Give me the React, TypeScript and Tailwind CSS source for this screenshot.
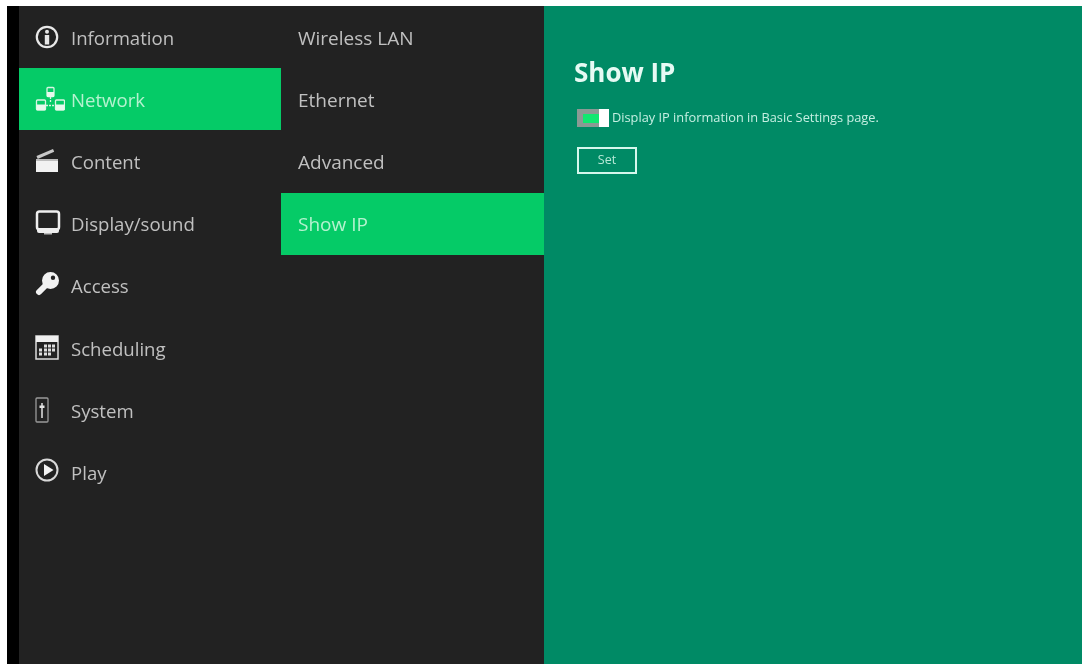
import { ReactNode } from 'react';

const InfoIcon = () => (
    <svg viewBox="0 0 24 24" className="w-6 h-6">
        <circle cx="12" cy="12" r="10.200" fill="none" stroke="#e8e8e8" strokeWidth="2.200" />
        <circle cx="12" cy="6.800" r="2" fill="#e8e8e8" />
        <rect x="9.800" y="10" width="4.400" height="9.500" fill="#e8e8e8" />
    </svg>
);

const NetworkIcon = () => (
    <svg viewBox="0 0 30 26" className="w-[30px] h-[26px]">
        <g fill="none" stroke="#d8f5e2" strokeWidth="1.300">
            <path d="M15.500 11v6M11 19.500h9" strokeDasharray="2 1" />
            <rect x="12" y="1.500" width="7" height="9" rx="1" />
            <rect x="1.500" y="14" width="9" height="10" rx="1" />
            <rect x="20.500" y="14" width="9" height="10" rx="1" />
        </g>
        <g fill="#e6faed">
            <rect x="12" y="6" width="7" height="5" />
            <rect x="1.500" y="18.500" width="9" height="5.500" />
            <rect x="20.500" y="18.500" width="9" height="5.500" />
        </g>
    </svg>
);

const ContentIcon = () => (
    <svg viewBox="0 0 24 26" className="w-6 h-[26px]">
        <path d="M1.500 8 18 1l1.200 2.800L2.700 11z" fill="#c8c8c8" />
        <path d="M1 11h22v3H1z" fill="#bdbdbd" />
        <rect x="1" y="13" width="22" height="11" fill="#f2f2f2" />
    </svg>
);

const DisplayIcon = () => (
    <svg viewBox="0 0 26 26" className="w-[26px] h-[26px]">
        <rect x="2" y="1.500" width="22" height="18" rx="2.500" fill="none" stroke="#eeeeee" strokeWidth="2.500" />
        <path d="M2 18h22v3a2 2 0 0 1-2 2H4a2 2 0 0 1-2-2z" fill="#eeeeee" />
        <rect x="9" y="23" width="8" height="1.500" fill="#bbbbbb" />
    </svg>
);

const KeyIcon = () => (
    <svg viewBox="0 0 26 26" className="w-[26px] h-[26px]">
        <path d="M11 13 4 20" stroke="#f2f2f2" strokeWidth="6" strokeLinecap="round" />
        <path
            fillRule="evenodd"
            d="M15.500 0a8.500 8.500 0 1 1 0 17 8.500 8.500 0 0 1 0-17zM18 3.500a2.200 2.200 0 1 0 0 4.400 2.200 2.200 0 0 0 0-4.400z"
            fill="#f2f2f2"
        />
    </svg>
);

const CalendarIcon = () => (
    <svg viewBox="0 1.500 24 24" className="w-6 h-6 overflow-visible">
        <rect x="1" y="1.500" width="22" height="23" fill="none" stroke="#dddddd" strokeWidth="1.500" />
        <rect x="1" y="1.500" width="22" height="6" fill="#f0f0f0" />
        <g fill="#dddddd">
            <rect x="9" y="10" width="3" height="3" />
            <rect x="13" y="10" width="3" height="3" />
            <rect x="17" y="10" width="3" height="3" />
            <rect x="4" y="14" width="3" height="3" />
            <rect x="9" y="14" width="3" height="3" />
            <rect x="13" y="14" width="3" height="3" />
            <rect x="17" y="14" width="3" height="3" />
            <rect x="4" y="18" width="3" height="3" />
            <rect x="9" y="18" width="3" height="3" />
            <rect x="13" y="18" width="3" height="3" />
        </g>
    </svg>
);

const SystemIcon = () => (
    <svg viewBox="0 0 14 26" className="w-[14px] h-[26px]">
        <rect x="1" y="1" width="12" height="24" rx="1" fill="none" stroke="#9a9a9a" strokeWidth="1.300" />
        <path d="M7 6v15" stroke="#e4e4e4" strokeWidth="1.500" />
        <rect x="4.500" y="8.500" width="5" height="2.500" fill="#e4e4e4" />
    </svg>
);

const PlayIcon = () => (
    <svg viewBox="0 2 24 24" className="w-6 h-6 overflow-visible">
        <circle cx="12" cy="12" r="10.500" fill="none" stroke="#d8d8d8" strokeWidth="2" />
        <path d="M9 6 18.500 12 9 18z" fill="#f2f2f2" />
    </svg>
);

interface MenuEntry {
    label: string;
    icon: ReactNode;
    active?: boolean;
}

const mainMenu: MenuEntry[] = [
    { label: 'Information', icon: <InfoIcon /> },
    { label: 'Network', icon: <NetworkIcon />, active: true },
    { label: 'Content', icon: <ContentIcon /> },
    { label: 'Display/sound', icon: <DisplayIcon /> },
    { label: 'Access', icon: <KeyIcon /> },
    { label: 'Scheduling', icon: <CalendarIcon /> },
    { label: 'System', icon: <SystemIcon /> },
    { label: 'Play', icon: <PlayIcon /> }
];

const subMenu = ['Wireless LAN', 'Ethernet', 'Advanced', 'Show IP'];

export default function App() {
    return (
        <div className="h-[667px] bg-white pl-[7px] pr-[5px] pt-[6px] pb-[3px] font-['Open_Sans','Noto_Sans',sans-serif] overflow-hidden">
            <div className="flex h-full blur-[0.5px]">
                <div className="w-3 bg-black" />

                <div className="w-[262px] bg-[#222222]">
                    {mainMenu.map((item) => (
                        <div
                            key={item.label}
                            className={`h-[62.100px] flex items-center text-[18.600px] ${
                                item.active ? 'bg-[#05cb67] text-[#b5f2cf]' : 'text-[#c0c0c0]'
                            }`}
                        >
                            <div className="w-[52px] pl-[16px] flex justify-start shrink-0">{item.icon}</div>
                            <span className="pt-[2px]">{item.label}</span>
                        </div>
                    ))}
                </div>

                <div className="w-[263px] bg-[#222222]">
                    {subMenu.map((label) => (
                        <div
                            key={label}
                            className={`h-[62.300px] flex items-center pl-[17px] text-[19px] ${
                                label === 'Show IP' ? 'bg-[#05cb67] text-[#b5f2cf]' : 'text-[#c0c0c0]'
                            }`}
                        >
                            <span className={label === 'Show IP' ? '' : 'pt-[2px]'}>{label}</span>
                        </div>
                    ))}
                </div>

                <div className="flex-1 bg-[#008a65] pl-[30px] pt-[49px] text-[#c5efe2]">
                    <h1 className="text-[26px] leading-[34px] font-bold text-[#e6faf4]">Show IP</h1>
                    <div className="mt-[19px] ml-[3px] flex items-center h-5">
                        <div className="w-[32px] h-[18px] bg-[#8a9a94] flex items-center justify-between pl-[6px]">
                            <div className="w-[16px] h-[9px] bg-[#10e870]" />
                            <div className="w-[10px] h-[18px] bg-white" />
                        </div>
                        <span className="text-[12.800px] ml-[3px]">Display IP information in Basic Settings page.</span>
                    </div>
                    <button className="mt-[19px] ml-[3px] block w-[60px] h-[27px] border-2 border-[#d5f7ec] text-[12.500px] text-[#b5e8d6]">
                        Set
                    </button>
                </div>
            </div>
        </div>
    );
}
